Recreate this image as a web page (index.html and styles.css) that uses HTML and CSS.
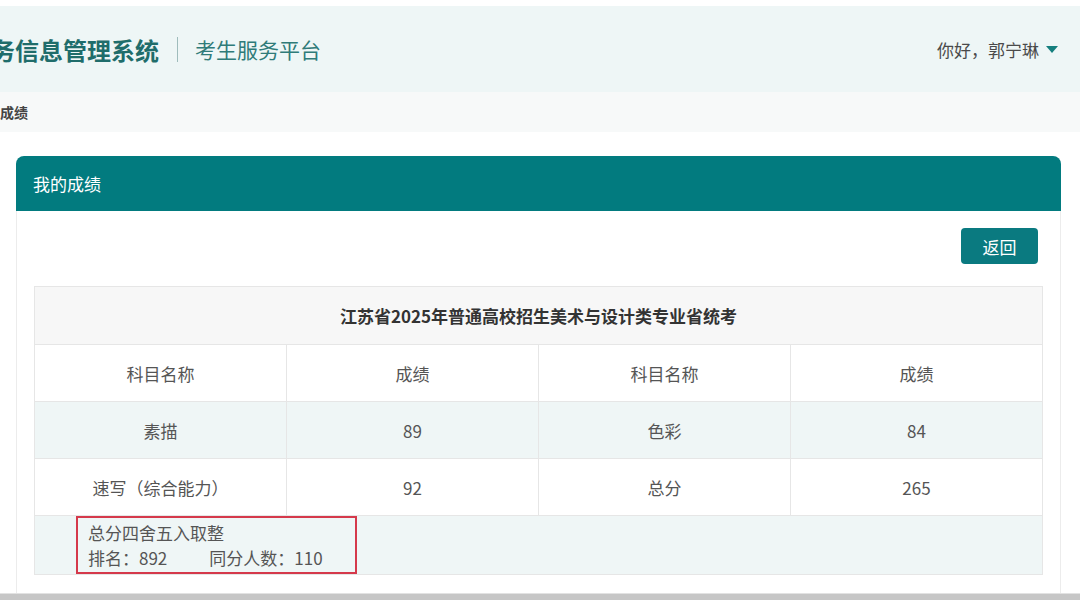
FILE: index.html
```html
<!DOCTYPE html>
<html lang="zh-CN">
<head>
    <meta charset="UTF-8">
    <meta name="viewport" content="width=device-width, initial-scale=1.0">
    <title>我的成绩</title>
    <link rel="stylesheet" href="styles.css">
</head>
<body>
    <div class="header">
        <div class="brand">
            <h1>务信息管理系统</h1>
            <span class="divider"></span>
            <span class="sub-title">考生服务平台</span>
        </div>
        <div class="user">
            你好，郭宁琳
            <span class="caret"></span>
        </div>
    </div>

    <div class="breadcrumb">成绩</div>

    <div class="card">
        <div class="card-head">我的成绩</div>
        <div class="card-body">
            <div class="tools">
                <button type="button" class="button">返回</button>
            </div>

            <table class="score-table">
                <tr class="title-row">
                    <th colspan="4">江苏省2025年普通高校招生美术与设计类专业省统考</th>
                </tr>
                <tr>
                    <td>科目名称</td>
                    <td>成绩</td>
                    <td>科目名称</td>
                    <td>成绩</td>
                </tr>
                <tr class="shade">
                    <td>素描</td>
                    <td>89</td>
                    <td>色彩</td>
                    <td>84</td>
                </tr>
                <tr>
                    <td>速写（综合能力）</td>
                    <td>92</td>
                    <td>总分</td>
                    <td>265</td>
                </tr>
                <tr class="shade">
                    <td colspan="4" class="note-cell">
                        <div class="note">
                            <p>总分四舍五入取整</p>
                            <p>排名：892<span class="gap"></span>同分人数：110</p>
                        </div>
                    </td>
                </tr>
            </table>
        </div>
    </div>

    <div class="bottom-bar"></div>
</body>
</html>
```

FILE: styles.css
```css
body {
    font-family: "Noto Sans CJK SC", "Noto Sans", sans-serif;
    margin: 0;
    padding: 0;
    background-color: #fff;
    color: #555;
    overflow: hidden;
}

.header {
    margin-top: 6px;
    height: 86px;
    background-color: #eef6f6;
    display: flex;
    justify-content: space-between;
    align-items: center;
    padding-right: 22px;
}

.brand {
    display: flex;
    align-items: center;
}

.brand h1 {
    margin: 0 0 0 -9px;
    font-size: 24px;
    font-weight: bold;
    color: #1f6d6b;
    letter-spacing: 0;
}

.divider {
    width: 1px;
    height: 25px;
    background-color: #9fbcbc;
    margin: 0 17px 0 18px;
}

.sub-title {
    font-size: 21px;
    color: #2f7b79;
}

.user {
    font-size: 17px;
    color: #4a4a4a;
    display: flex;
    align-items: center;
}

.caret {
    width: 0;
    height: 0;
    border-left: 6px solid transparent;
    border-right: 6px solid transparent;
    border-top: 7px solid #157f7e;
    margin-left: 7px;
}

.breadcrumb {
    height: 40px;
    line-height: 40px;
    background-color: #f7f9f9;
    font-size: 14px;
    font-weight: bold;
    color: #444;
    margin-bottom: 24px;
}

.card {
    margin: 0 19px 0 16px;
}

.card-head {
    height: 55px;
    line-height: 55px;
    background-color: #027b7f;
    color: #fff;
    font-size: 17px;
    padding-left: 17px;
    border-radius: 8px 8px 0 0;
}

.card-body {
    border-left: 1px solid #ececec;
    border-right: 1px solid #ececec;
    padding: 17px 17px 18px 17px;
}

.tools {
    display: flex;
    justify-content: flex-end;
    padding-right: 5px;
    margin-bottom: 22px;
}

.button {
    background-color: #0a7a80;
    color: #fff;
    font-family: inherit;
    font-size: 17px;
    width: 77px;
    height: 36px;
    border: none;
    border-radius: 4px;
    cursor: pointer;
}

.score-table {
    width: 100%;
    border-collapse: collapse;
    table-layout: fixed;
    border: 1px solid #e6e6e6;
}

.score-table th,
.score-table td {
    border: 1px solid #e6e6e6;
    height: 56px;
    padding: 0;
    text-align: center;
    font-size: 17px;
    color: #555;
    font-weight: normal;
}

.title-row th {
    background-color: #f7f7f7;
    font-weight: bold;
    color: #333;
    height: 57px;
}

.shade td {
    background-color: #eff6f6;
}

.note-cell {
    text-align: left !important;
    padding-left: 41px !important;
}

.note {
    display: inline-block;
    border: 2px solid #d5394b;
    width: 257px;
    height: 52px;
    padding: 2px 10px 0 10px;
    vertical-align: bottom;
}

.note p {
    margin: 0;
    line-height: 25px;
    font-size: 17px;
    color: #555;
}

.gap {
    display: inline-block;
    width: 42px;
}

.bottom-bar {
    height: 7px;
    background-color: #c6c6c6;
    border-top: 1px solid #e2e2e2;
}
```
